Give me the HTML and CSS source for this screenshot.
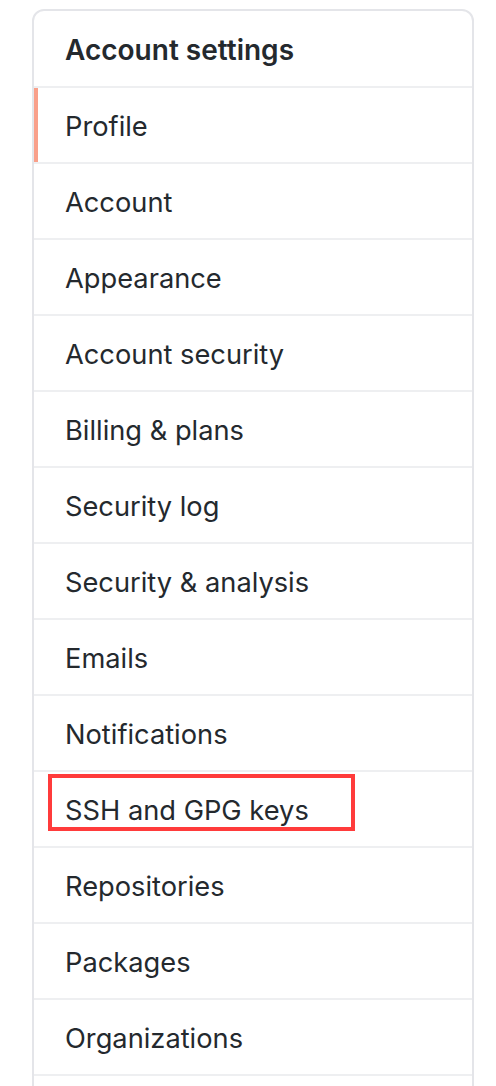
FILE: index.html
```html
<!DOCTYPE html>
<html lang="en">
<head>
<meta charset="utf-8">
<title>Account settings</title>
<link rel="stylesheet" href="styles.css">
</head>
<body>
<nav class="menu">
  <h3 class="menu-heading">Account settings</h3>
  <a class="menu-item selected">Profile</a>
  <a class="menu-item">Account</a>
  <a class="menu-item">Appearance</a>
  <a class="menu-item">Account security</a>
  <a class="menu-item">Billing &amp; plans</a>
  <a class="menu-item">Security log</a>
  <a class="menu-item">Security &amp; analysis</a>
  <a class="menu-item">Emails</a>
  <a class="menu-item">Notifications</a>
  <a class="menu-item highlighted">SSH and GPG keys<span class="mark"></span></a>
  <a class="menu-item">Repositories</a>
  <a class="menu-item">Packages</a>
  <a class="menu-item">Organizations</a>
  <div class="menu-item empty"></div>
</nav>
</body>
</html>
```

FILE: styles.css
```css
html, body {
  margin: 0;
  padding: 0;
  background: #ffffff;
}
body {
  font-family: "Inter", "Liberation Sans", sans-serif;
  color: #24292e;
  padding: 9px 0 0 32px;
  width: 474px;
  height: 1086px;
  box-sizing: border-box;
  overflow: hidden;
}
.menu {
  display: flex;
  flex-direction: column;
  border: 2px solid #e4e5e9;
  border-radius: 12px;
  background: #fff;
}
.menu-heading {
  margin: 0;
  padding: 3px 31px 0;
  height: 77px;
  box-sizing: border-box;
  display: flex;
  align-items: center;
  font-size: 28px;
  font-weight: 600;
  border-bottom: 2px solid #eeeff1;
}
.menu-item {
  position: relative;
  display: flex;
  align-items: center;
  height: 76px;
  box-sizing: border-box;
  padding: 2px 31px 0;
  font-size: 27.25px;
  border-bottom: 2px solid #eeeff1;
  color: #24292e;
}
.menu-item.selected::before {
  content: "";
  position: absolute;
  left: 0;
  top: 0;
  bottom: 0;
  width: 4px;
  background: #f9a08a;
}
.mark {
  position: absolute;
  left: 14px;
  top: 2px;
  width: 307px;
  height: 57px;
  box-sizing: border-box;
  border: 4px solid #ff3b3b;
}
```
